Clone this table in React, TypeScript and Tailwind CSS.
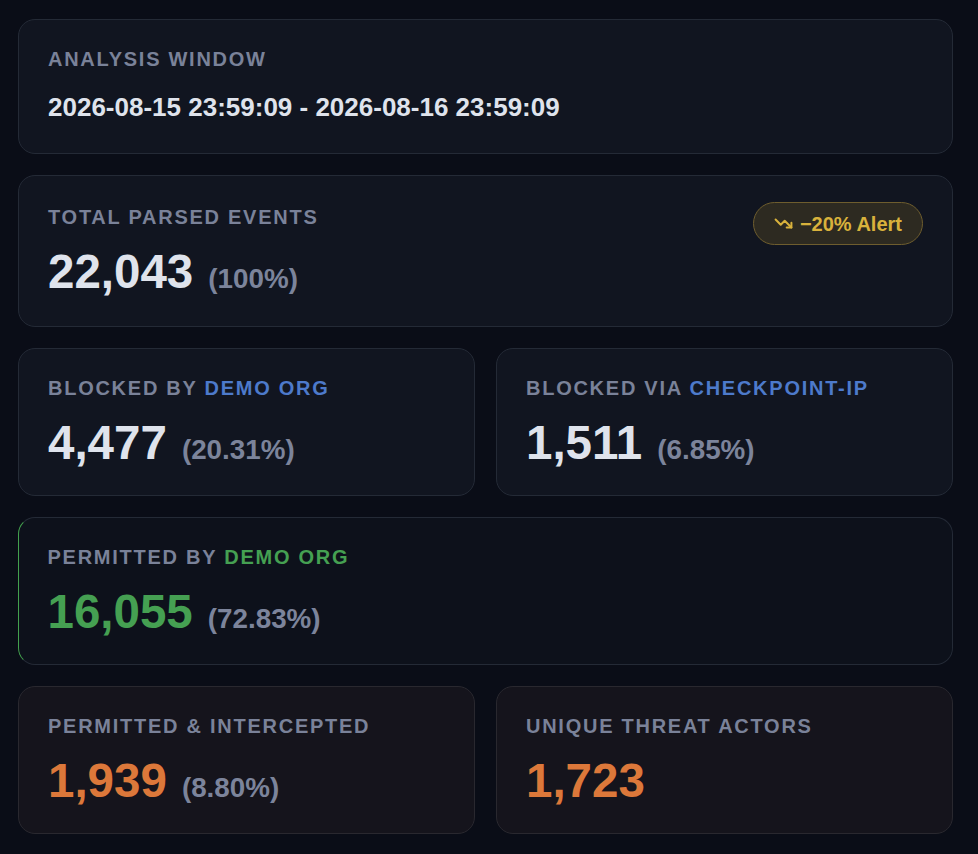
import { TrendingDown } from "lucide-react";

const font = { fontFamily: '"Liberation Sans", Arial, sans-serif' };

function Label({ children }: { children: React.ReactNode }) {
  return (
    <p className="text-[20px] font-bold uppercase leading-[24px] tracking-[0.087em] text-[#7a8299]">{children}</p>
  );
}

function Stat({ value, pct, tone = "text-[#dfe3ec]" }: { value: string; pct?: string; tone?: string }) {
  return (
    <div className="mt-[19px] flex h-[47px] items-baseline gap-[15px]">
      <span className={`text-[47.5px] font-bold leading-[47px] ${tone}`}>{value}</span>
      {pct && <span className="text-[27.8px] font-bold leading-none text-[#7c849b]">{pct}</span>}
    </div>
  );
}

export default function App() {
  return (
    <div style={font} className="min-h-screen bg-[#0a0d17] pt-[19px] pb-[20px] pl-[18px]">
      <div className="flex w-[935px] flex-col gap-[21px]">
        <section className="rounded-[17px] border border-[#242a36] bg-[#111520] pl-[29px] pt-[27px] pb-[30px]">
          <Label>Analysis Window</Label>
          <p className="mt-[20px] text-[26px] font-bold leading-[32px] text-[#dfe3ec]">
            2026-08-15 23:59:09 - 2026-08-16 23:59:09
          </p>
        </section>

        <section className="flex items-start justify-between rounded-[17px] border border-[#242a36] bg-[#111520] pl-[29px] pr-[29px] pt-[29px] pb-[31px]">
          <div>
            <Label>Total Parsed Events</Label>
            <Stat value="22,043" pct="(100%)" />
          </div>
          <span className="-mt-[3px] flex h-[43px] items-center gap-[7px] rounded-full border-[1.5px] border-[#6e5d2e] bg-[#2d2a21] px-[20px] text-[20px] font-bold text-[#d9b23c]">
            <TrendingDown size={19} strokeWidth={2.5} />
            −20% Alert
          </span>
        </section>

        <div className="grid grid-cols-2 gap-[21px]">
          <section className="rounded-[17px] border border-[#242a36] bg-[#111520] pl-[29px] pt-[27px] pb-[29px]">
            <Label>
              Blocked by <span className="text-[#4d7acb]">Demo Org</span>
            </Label>
            <Stat value="4,477" pct="(20.31%)" />
          </section>
          <section className="rounded-[17px] border border-[#242a36] bg-[#111520] pl-[29px] pt-[27px] pb-[29px]">
            <Label>
              Blocked via <span className="text-[#4d7acb]">Checkpoint-IP</span>
            </Label>
            <Stat value="1,511" pct="(6.85%)" />
          </section>
        </div>

        <section className="rounded-[17px] border border-[#242a36] border-l-[1.5px] border-l-[#43a04e] bg-[#0d111b] pl-[28.5px] pt-[27px] pb-[29px]">
          <Label>
            Permitted by <span className="text-[#45a052]">Demo Org</span>
          </Label>
          <Stat value="16,055" pct="(72.83%)" tone="text-[#45a052]" />
        </section>

        <div className="grid grid-cols-2 gap-[21px]">
          <section className="rounded-[17px] border border-[#29282f] bg-[#15141c] pl-[29px] pt-[27px] pb-[29px]">
            <Label>Permitted &amp; Intercepted</Label>
            <Stat value="1,939" pct="(8.80%)" tone="text-[#dc783a]" />
          </section>
          <section className="rounded-[17px] border border-[#29282f] bg-[#15141c] pl-[29px] pt-[27px] pb-[29px]">
            <Label>Unique Threat Actors</Label>
            <Stat value="1,723" tone="text-[#dc783a]" />
          </section>
        </div>
      </div>
    </div>
  );
}
